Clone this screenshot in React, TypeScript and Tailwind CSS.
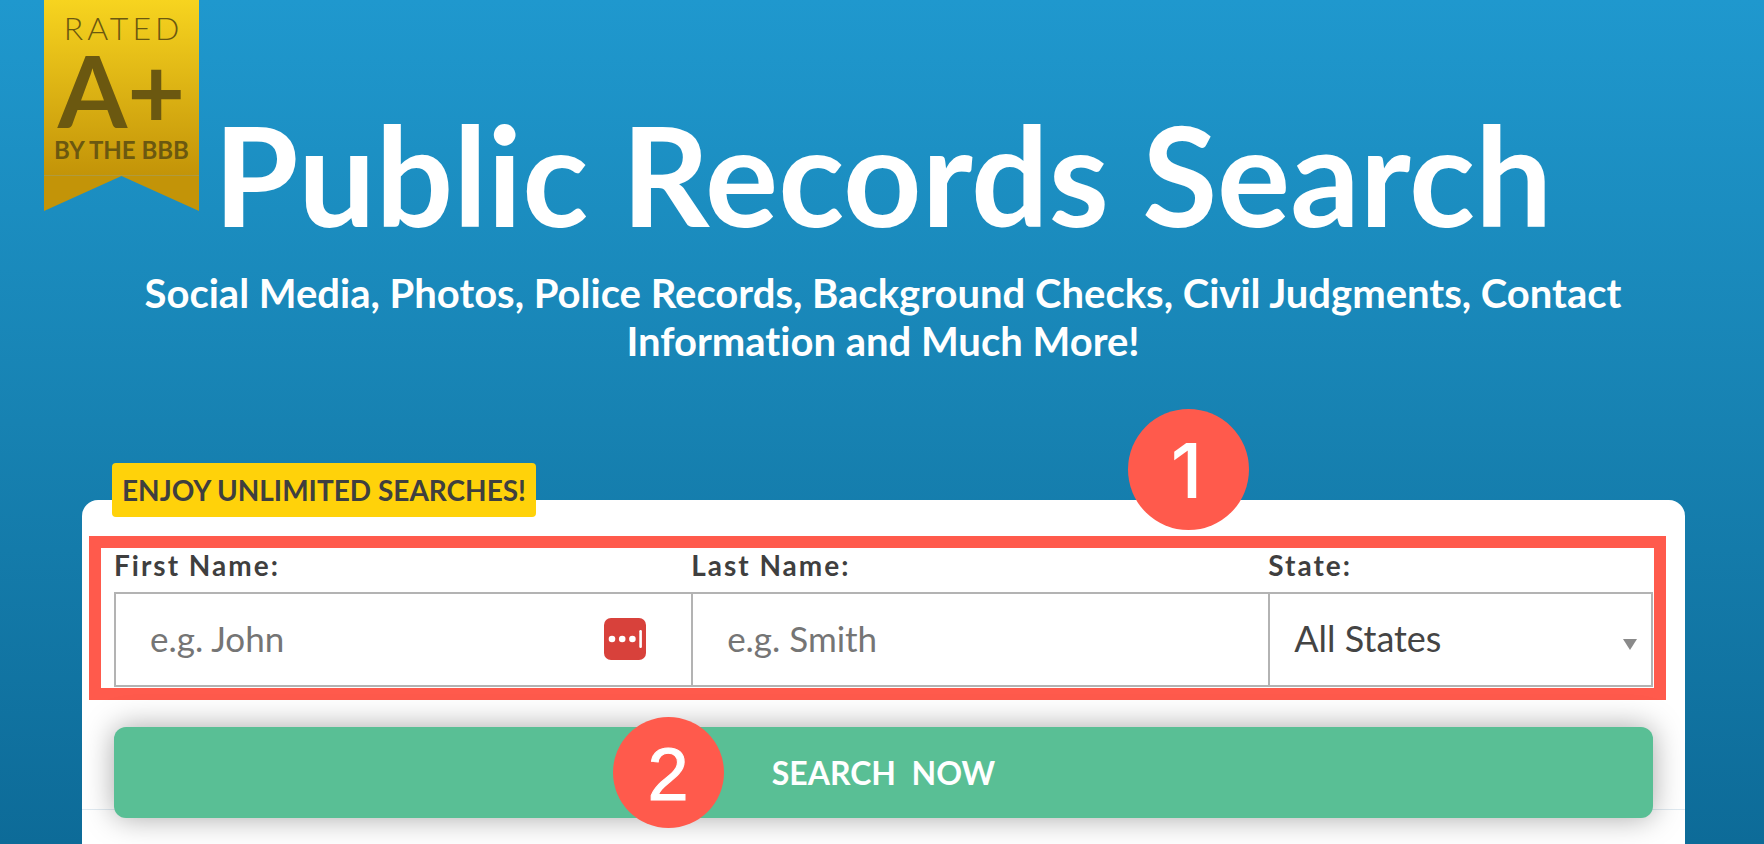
import React from "react";

const fieldClass =
  "block h-[95px] w-full appearance-none rounded-none border-2 border-r-0 border-[#b3b3b3] bg-white text-[#444444] outline-none";
const inputClass = "px-[34px] pb-1 text-[35px] placeholder:text-[#757575]";
const labelClass =
  "block h-11 pt-px text-[28px] leading-[32px] font-bold tracking-[2px] text-[#3f3f3f]";

function RatingRibbon() {
  return (
    <aside className="absolute top-0 left-11 w-[155px] text-center text-[#6b5810]">
      <div className="flex h-44 flex-col items-center border-b border-[#b09a3c] bg-linear-to-b from-[#f7d41f] to-[#c39408]">
        <span className="pt-[11px] pl-1 text-[32px] leading-[34px] font-light tracking-[4px]">RATED</span>
        <span className="text-[100px] leading-[88px] font-bold">A+</span>
        <span className="pt-[5px] text-[24px] leading-[24px] font-bold whitespace-nowrap">BY THE BBB</span>
      </div>
      <svg className="block h-[35px] w-full" viewBox="0 0 155 35" preserveAspectRatio="none" aria-hidden="true">
        <path d="M0 0H155V35L77.5 0L0 35Z" fill="#c39408" />
      </svg>
    </aside>
  );
}

function PasswordManagerIcon() {
  return (
    <svg className="absolute top-[26px] right-[45px] h-[42px] w-[42px]" viewBox="0 0 42 42" aria-hidden="true">
      <rect width="42" height="42" rx="7" fill="#d8413b" />
      <circle cx="8" cy="21" r="3.3" fill="#fff" />
      <circle cx="18.2" cy="21" r="3.3" fill="#fff" />
      <circle cx="28.4" cy="21" r="3.3" fill="#fff" />
      <rect x="35.3" y="12" width="2.6" height="18" rx="1.2" fill="#fff" />
    </svg>
  );
}

export default function App() {
  return (
    <main className="relative flex min-h-screen flex-col overflow-hidden bg-linear-to-b from-[#1f98ce] via-[#1782b2] to-[#0d6b98] font-['Lato',sans-serif] [font-variant-ligatures:none]">
      <RatingRibbon />
      <header className="pt-[92px] pr-24 pl-[98px] text-center text-white">
        <h1 className="text-[137px] leading-[164px] font-bold whitespace-nowrap">Public Records Search</h1>
        <p className="mx-auto mt-[13px] max-w-[1540px] text-[40px] leading-[48px] font-bold">
          Social Media, Photos, Police Records, Background Checks, Civil Judgments, Contact Information and Much More!
        </p>
      </header>

      <form
        className="relative mt-[135px] mr-[79px] ml-[82px] flex flex-1 flex-col rounded-t-2xl bg-white pt-9"
        onSubmit={(e) => e.preventDefault()}
      >
        <strong className="absolute -top-[37px] left-[30px] rounded bg-[#ffd20a] px-[10px] text-[28px] leading-[54px] font-bold whitespace-nowrap text-[#3f3f3f]">
          ENJOY UNLIMITED SEARCHES!
        </strong>
        <span className="absolute -top-[91px] left-[65.25%] flex size-[121px] items-center justify-center rounded-full bg-[#ff5a4c] pr-1 font-['Inter',sans-serif] text-[76px] leading-none font-medium text-white">
          1
        </span>

        <div className="mr-[19px] ml-[7px] grid grid-cols-[3fr_3fr_2fr] border-12 border-[#ff5a4c] pr-px pb-px pl-[13px]">
          <div>
            <label className={labelClass} htmlFor="first">First Name:</label>
            <div className="relative">
              <input id="first" className={`${fieldClass} ${inputClass}`} placeholder="e.g. John" />
              <PasswordManagerIcon />
            </div>
          </div>
          <div>
            <label className={labelClass} htmlFor="last">Last Name:</label>
            <input id="last" className={`${fieldClass} ${inputClass}`} placeholder="e.g. Smith" />
          </div>
          <div>
            <label className={labelClass} htmlFor="state">State:</label>
            <div className="relative border-r-2 border-[#b3b3b3]">
              <select id="state" className={`${fieldClass} px-6 pb-1 text-[36px]`}>
                <option>All States</option>
              </select>
              <svg className="pointer-events-none absolute right-[14px] bottom-[37px] h-[11px] w-[14px]" viewBox="0 0 14 11" aria-hidden="true">
                <path d="M0 0H14L7 11Z" fill="#8a8a8a" />
              </svg>
            </div>
          </div>
        </div>

        <div className="relative z-10 mx-8 mt-[27px] -mb-[9px]">
          <button
            type="submit"
            className="block h-[91px] w-full rounded-xl bg-[#59bf95] text-[32px] font-bold text-white shadow-[0_0_30px_rgba(0,0,0,0.35)]"
          >
            SEARCH&nbsp; NOW
          </button>
          <span className="absolute -top-[10px] left-[32.4%] flex size-[111px] items-center justify-center rounded-full bg-[#ff5a4c] pt-1 font-['Liberation_Sans',sans-serif] text-[74px] leading-none text-white [-webkit-text-stroke:1px_white]">
            2
          </span>
        </div>
        <div className="flex-1 border-t border-[#e0eaf1]" />
      </form>
    </main>
  );
}
